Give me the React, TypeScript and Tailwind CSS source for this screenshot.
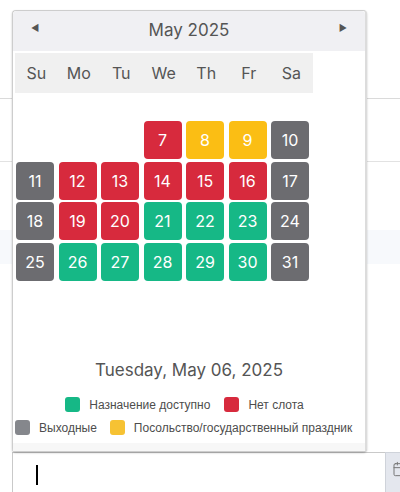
import { Calendar } from 'lucide-react';

type Kind = 'red' | 'yellow' | 'gray' | 'green' | 'empty';

const cellColors: Record<Kind, string> = {
  red: 'bg-[#d72a3d]',
  yellow: 'bg-[#fbbe14]',
  gray: 'bg-[#6c6c70]',
  green: 'bg-[#16b886]',
  empty: 'bg-transparent',
};

const days: { n?: number; k: Kind }[] = [
  { k: 'empty' }, { k: 'empty' }, { k: 'empty' },
  { n: 7, k: 'red' }, { n: 8, k: 'yellow' }, { n: 9, k: 'yellow' }, { n: 10, k: 'gray' },
  { n: 11, k: 'gray' }, { n: 12, k: 'red' }, { n: 13, k: 'red' }, { n: 14, k: 'red' },
  { n: 15, k: 'red' }, { n: 16, k: 'red' }, { n: 17, k: 'gray' },
  { n: 18, k: 'gray' }, { n: 19, k: 'red' }, { n: 20, k: 'red' }, { n: 21, k: 'green' },
  { n: 22, k: 'green' }, { n: 23, k: 'green' }, { n: 24, k: 'gray' },
  { n: 25, k: 'gray' }, { n: 26, k: 'green' }, { n: 27, k: 'green' }, { n: 28, k: 'green' },
  { n: 29, k: 'green' }, { n: 30, k: 'green' }, { n: 31, k: 'gray' },
];

const weekDays = ['Su', 'Mo', 'Tu', 'We', 'Th', 'Fr', 'Sa'];

function LegendItem({ color, label }: { color: string; label: string }) {
  return (
    <div className="flex items-center gap-[9px] whitespace-nowrap">
      <span className={`w-[15px] h-[15px] rounded-[3px] shrink-0 ${color}`} />
      <span>{label}</span>
    </div>
  );
}

export default function App() {
  return (
    <div className="relative w-[400px] h-[492px] overflow-hidden bg-white">
      {/* page behind the picker */}
      <div className="h-[98px]" />
      <div className="h-[63px] border-t border-[#dadada]" />
      <div className="h-[69px] border-t border-[#e2e2e2]" />
      <div className="h-[34px] bg-[#f7f9fc]" />
      <div className="h-[188px]" />
      <div className="flex h-[40px] ml-[12px]">
        <div className="flex-1 flex items-start border-t border-l border-[#c9c9c9] pl-[23px] pt-[12px]">
          <span className="w-[2px] h-[20px] bg-black" />
        </div>
        <div className="w-[15px] bg-[#e4e7ee] border-t border-l border-[#cfd3da] pt-[8px] pl-[6px] overflow-hidden">
          <Calendar className="w-[16px] h-[16px] text-[#777]" strokeWidth={1.5} />
        </div>
      </div>

      {/* datepicker popup */}
      <div
        className="absolute left-[12px] top-[10px] w-[355px] h-[442px] bg-white border border-[#cdcdcd] border-r-2 border-r-[#dcdcdc] rounded-[4px] shadow-[0_1px_2px_rgba(0,0,0,0.25)] flex flex-col"
        style={{ fontFamily: 'Inter, "Noto Sans", sans-serif' }}
      >
        <div className="h-[40px] bg-[#f0f0f3] rounded-t-[4px] flex items-center justify-between px-[18px] text-[#555]">
          <span className="mb-[7px] text-[9px]">◀</span>
          <span className="text-[17px] text-[#555]">May 2025</span>
          <span className="mb-[7px] text-[9px]">▶</span>
        </div>
        <div className="h-[2px]" />
        <div className="ml-[2px] w-[297.5px] h-[40px] bg-[#f0f0f0] grid grid-cols-7 items-center text-center text-[16px] text-[#555]">
          {weekDays.map((d) => (
            <span key={d}>{d}</span>
          ))}
        </div>
        <div className="h-[28px]" />
        <div className="ml-[3px] grid grid-cols-[repeat(7,38px)] gap-x-[4.5px] gap-y-[2.5px]">
          {days.map((d, i) => (
            <div
              key={i}
              className={`h-[38px] rounded-[4px] flex items-center justify-center text-white text-[16px] ${cellColors[d.k]}`}
            >
              {d.n}
            </div>
          ))}
        </div>
        <div className="mt-[77px] h-[24px] text-center text-[17px] text-[#555] leading-[24px]">
          Tuesday, May 06, 2025
        </div>
        <div
          className="text-[12px] text-[#4d4d4d]"
          style={{ fontFamily: '"Liberation Sans", Arial, sans-serif' }}
        >
          <div className="mt-[14px] h-[18px] flex items-center justify-center gap-[14px] pr-[9px]">
            <LegendItem color="bg-[#16b886]" label="Назначение доступно" />
            <LegendItem color="bg-[#d72a3d]" label="Нет слота" />
          </div>
          <div className="mt-[5px] h-[18px] flex items-center gap-[13px] pl-[2px]">
            <LegendItem color="bg-[#85878c]" label="Выходные" />
            <LegendItem color="bg-[#f6c233]" label="Посольство/государственный праздник" />
          </div>
        </div>
        <div className="flex-1 mt-[6px] bg-[#f7f7f7]" />
      </div>
    </div>
  );
}
